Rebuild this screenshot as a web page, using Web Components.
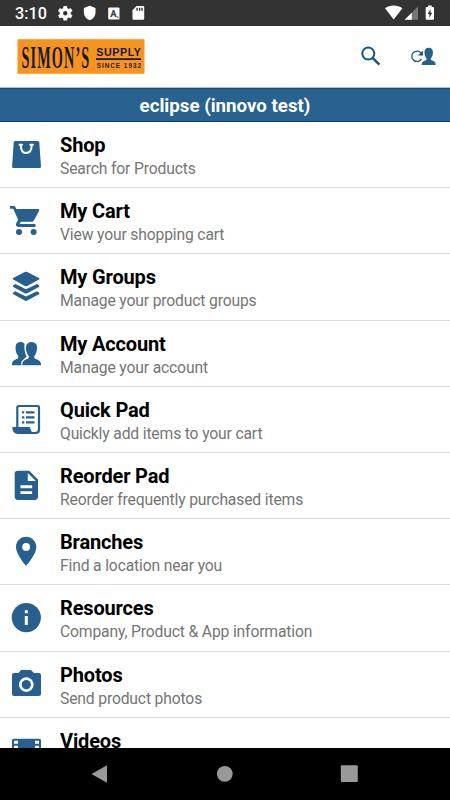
<!DOCTYPE html>
<html lang="en"><head><meta charset="utf-8"><title>Simon's Supply</title>
<style>html,body{margin:0;height:100%;overflow:hidden;background:#fff}body{font-family:Roboto,"Noto Sans",sans-serif}</style></head>
<body><supply-app></supply-app>
<script>
const ICONS={
shop:'<path d="M5.200 2H27.700Q29.200 2 29.300 3.500L31 27.500Q31 29 29.500 29H3.500Q2 29 2.100 27.500L3.700 3.500Q3.900 2 5.200 2Z"/><path d="M10.800 6C10.800 11 12.300 14 16 14S21.700 11 21.700 6M9.500 5.700H12M20.300 5.700H22.900" fill="none" stroke="#fff" stroke-width="2" stroke-linecap="round"/>',
cart:'<path d="M0 1H4.800L6.300 4.100H28.200Q29.800 4.300 29.200 5.800L24 15.200Q23.200 16.700 21.500 16.700H11L9.600 19H25.500V22H8.300Q5.500 21.600 6 18.800L8.200 14.800 3.200 3.700H0Z"/><circle cx="9" cy="27" r="3"/><circle cx="23.600" cy="27" r="3"/>',
groups:'<path d="M14.800 1.100Q16 .5 17.200 1.100L28.900 7Q30.200 7.800 28.900 8.600L17.200 14.900Q16 15.500 14.800 14.900L3.300 8.600Q2 7.800 3.300 7Z"/><path d="M3.300 14.200L5.300 13.100 16 18.200 27 13.100 28.900 14.200Q30.200 15.200 28.900 16L17.200 22.300Q16 22.900 14.800 22.300L3.300 16Q2 15.200 3.300 14.200ZM3.300 21.400L5.300 20.300 16 25.400 27 20.300 28.900 21.400Q30.200 22.400 28.900 23.200L17.200 29.600Q16 30.200 14.800 29.600L3.300 23.200Q2 22.400 3.300 21.400Z"/>',
account:'<path d="M2 27.300C1.900 23.500 3 22.300 7.500 20.700Q8.700 20 8.300 18C6 15.500 5.300 12 5.600 8.500C5.900 5.500 7.800 4 10.500 4C12.300 4 13.500 4.500 14.500 6C14.300 10 14.200 14 16.500 18.200C16.300 20 12 21.500 11.300 24.300V27.300Z"/><path d="M12.300 27.300C12.200 23.500 13.300 22.300 18 20.700Q19.200 20 18.800 18C16.500 15.500 15.700 12 16 8.500C16.400 5.500 18.600 4 21.500 4S26.700 5.500 27 8.500C27.300 12 26.400 15.500 24.300 18Q23.900 20 25 20.700C29.800 22.300 31.100 23.500 31.100 27.300Z" stroke="#fff" stroke-width=".7" paint-order="stroke"/>',
quick:'<path d="M7.300 23V3.500Q7.300 2 8.800 2H27.500Q29 2 29 3.500V25.500Q29 29 25.500 29H7" fill="none" stroke="currentColor" stroke-width="2.200"/><path d="M2.300 23H20Q20.300 28 25 30H8Q2.300 30 2.300 23Z"/><path d="M12 8.300H14.300M16 8.300H24.500M12 13.300H14.300M16 13.300H24.500M12 18.300H14.300M16 18.300H24.500" stroke="currentColor" stroke-width="2.200"/>',
reorder:'<g transform="translate(-1.150,-2.150) scale(1.457)"><path fill-rule="evenodd" d="M14 2H6c-1.100 0-2 .9-2 2v16c0 1.100.9 2 2 2h12c1.100 0 2-.9 2-2V8l-6-6zm2 16H8v-2h8v2zm0-4H8v-2h8v2zm-3-5V3.500L18.500 9H13z"/></g>',
branches:'<g transform="translate(-1.250,-2.100) scale(1.450)"><path fill-rule="evenodd" d="M12 2C8.130 2 5 5.130 5 9c0 5.250 7 13 7 13s7-7.750 7-13c0-3.870-3.130-7-7-7zm0 9.700a2.700 2.700 0 1 1 0-5.400 2.700 2.700 0 0 1 0 5.400z"/></g>',
resources:'<circle cx="16.300" cy="15.600" r="14.600"/><path d="M14.800 8.300H17.800V11.200H14.800ZM14.800 14H17.800V23H14.800Z" fill="#fff"/>',
photos:'<path d="M11 1H21L24 4H29Q31 4 31 6V25Q31 27 29 27H4Q2 27 2 25V6Q2 4 4 4H8.500Z"/><circle cx="16.300" cy="15.600" r="6" fill="none" stroke="#fff" stroke-width="2.700"/>',
videos:'<rect x="2" y="3.700" width="29" height="24" rx="1.500"/><path d="M4 5.700h4v3H4zM4 10.800h4v3H4zM4 15.900h4v3H4zM4 21h4v3H4zM25 5.700h4v3h-4zM25 10.800h4v3h-4zM25 15.900h4v3h-4zM25 21h4v3h-4z" fill="#fff"/>'
};
const def=(name,html)=>customElements.define(name,class extends HTMLElement{
  constructor(){super();const t=document.createElement('template');t.innerHTML=html;this.attachShadow({mode:'open'}).append(t.content.cloneNode(true));}
});
customElements.define('row-icon',class extends HTMLElement{
  connectedCallback(){if(this.shadowRoot)return;this.attachShadow({mode:'open'}).innerHTML=`<style>:host{display:block;width:32px;height:32px;color:#27608f}svg{display:block}</style><svg width="32" height="32" viewBox="0 0 32 32" fill="currentColor">${ICONS[this.getAttribute('name')]}</svg>`;}
});
customElements.define('menu-row',class extends HTMLElement{
  connectedCallback(){if(this.shadowRoot)return;this.attachShadow({mode:'open'}).innerHTML=`<style>
  :host{display:grid;grid-template-columns:32px 1fr;column-gap:18px;box-sizing:border-box;height:66.200px;flex:none;padding:11px 10px 0;border-bottom:1.250px solid #dcdcdc}
  row-icon{margin-top:6px}
  .t{font-size:20px;letter-spacing:-.16px;line-height:24px;font-weight:700;color:#000;white-space:nowrap}
  .s{font-size:15.700px;letter-spacing:-.16px;line-height:20px;margin-top:2px;color:#757575;white-space:nowrap}
  </style><row-icon name="${this.getAttribute('icon')}"></row-icon><div><div class="t"><slot></slot></div><div class="s"><slot name="detail"></slot></div></div>`;}
});
def('status-bar',`<style>:host{display:flex;justify-content:space-between;height:25.500px;flex:none;background:#333;color:#fff}
.time{font-size:16.200px;line-height:27px;padding-left:15px;width:47px;box-sizing:border-box;white-space:nowrap;font-weight:500}.l{display:flex}svg{display:block}</style>
<div class="l"><div class="time">3:10</div><svg width="110" height="25" viewBox="47 0 110 25" fill="#fff"><g transform="translate(56.500,4.500) scale(.73)"><path fill-rule="evenodd" d="M19.430 12.980c.04-.32.070-.64.070-.98s-.03-.66-.07-.98l2.110-1.650c.19-.15.240-.42.120-.64l-2-3.460c-.12-.22-.39-.3-.61-.22l-2.490 1c-.52-.4-1.080-.73-1.690-.98l-.38-2.650A.49.490 0 0 0 14 2h-4c-.25 0-.46.180-.49.420l-.38 2.650c-.61.250-1.170.590-1.690.980l-2.490-1c-.23-.09-.49 0-.61.220l-2 3.460c-.13.220-.07.490.12.640l2.110 1.650c-.04.320-.07.650-.07.980s.03.660.070.980l-2.110 1.650c-.19.150-.24.420-.12.640l2 3.460c.12.220.39.300.61.220l2.490-1c.52.400 1.080.730 1.690.980l.38 2.650c.03.240.24.420.49.420h4c.25 0 .46-.18.490-.42l.38-2.650c.61-.25 1.170-.59 1.690-.98l2.490 1c.23.090.49 0 .61-.22l2-3.460c.12-.22.070-.49-.12-.64l-2.110-1.650zM12 15a3 3 0 1 1 0-6 3 3 0 0 1 0 6z"/></g>
<path d="M89.700 5.700L95.500 8V12.500C95.500 16 93 19.100 89.700 20.300C86.400 19.100 83.900 16 83.900 12.500V8Z"/><rect x="108.200" y="7.400" width="11.300" height="12" rx="1"/><text x="113.400" y="16.500" text-anchor="middle" font-family="Roboto,sans-serif" font-size="9.500" font-weight="700" style="fill:#333">A</text><path d="M117 16.600h1.300v1.200H117z" fill="#333"/>
<path d="M136.500 6H143Q144.200 6 144.200 7.200V18.600Q144.200 19.800 143 19.800H133.700Q132.500 19.800 132.500 18.600V10.300Z"/><path d="M136.400 7.800h1.400v3h-1.400zM138.900 7.800h1.400v3h-1.400zM141.300 7.800h1.400v3h-1.400z" fill="#333"/></svg></div>
<svg width="70" height="25" viewBox="380 0 70 25" fill="#fff"><path d="M385 8.200C390 4.600 397.400 4.600 402.400 8.200L393.700 19.500Z"/><path d="M418 6.600V19.700H404.600Z" fill="#777"/><path d="M411.800 12.700V19.700H404.600Z"/><path d="M428 5.500H431.700V7H433.200Q434 7 434 7.800V19Q434 19.800 433.200 19.800H426.500Q425.700 19.800 425.700 19V7.800Q425.700 7 426.500 7H428Z"/><path d="M430.700 9L427.600 14.100H429.400V18L432.200 12.800H430.400Z" fill="#333"/></svg>`);
def('brand-logo',`<style>:host{display:block;width:128px;height:35px}svg{display:block}</style>
<svg width="128" height="35" viewBox="17 39 128 35"><rect x="17.500" y="39.200" width="127" height="34.600" fill="#f7941f"/><g style="fill:#171a25"><text transform="translate(21.500,67.600) scale(.44,1)" textLength="154" lengthAdjust="spacing" font-family="Liberation Serif,serif" font-weight="700" font-size="32.500">SIMON’S</text><text x="96.300" y="56.200" textLength="44.700" lengthAdjust="spacing" font-family="Liberation Sans,sans-serif" font-weight="700" font-size="10.700">SUPPLY</text><path d="M96 58.200H141V60.100H96z"/><text x="96.700" y="67.600" textLength="44.300" lengthAdjust="spacing" font-family="Liberation Sans,sans-serif" font-weight="700" font-size="6.300">SINCE 1932</text></g></svg>`);
def('app-header',`<style>:host{display:flex;justify-content:space-between;box-sizing:border-box;height:62.500px;flex:none;background:#fff;padding:13.500px 0 0 17px;border-bottom:1px solid #b5bdc5}svg{display:block}</style>
<brand-logo></brand-logo><svg width="110" height="46" viewBox="340 39 110 46" fill="#14528a"><circle cx="368.300" cy="53.600" r="6" fill="none" stroke="#14528a" stroke-width="2"/><path d="M372.600 57.900L379.400 64.700" stroke="#14528a" stroke-width="2.400"/>
<path d="M421.300 53.300A5.200 5.200 0 1 0 421.600 58.700" fill="none" stroke="#14528a" stroke-width="1.300"/><path d="M423 50.800V55.500H418Z"/>
<path fill="#27608f" d="M421.800 65C421.700 62 422.600 61.300 426 60.200Q426.900 59.600 426.500 58.300C425 56.700 424.300 54.200 424.500 51.800C424.700 49.200 426.300 47.800 428.700 47.800S432.700 49.200 432.900 51.800C433.100 54.200 432.500 56.700 430.900 58.300Q430.600 59.600 431.400 60.200C434.800 61.300 435.700 62 435.600 65Z"/></svg>`);
def('site-banner',`<style>:host{display:block;box-sizing:border-box;height:34px;flex:none;background:#29618f;border-top:1px solid #164a7b;border-bottom:1px solid #073a78;color:#fff;text-align:center;font-size:18.700px;font-weight:700;line-height:34px}</style><slot></slot>`);
def('nav-bar',`<style>:host{display:block;height:52px;flex:none;background:#000}svg{display:block}</style><svg width="450" height="52" fill="#999"><path d="M107 17.200V34.700L91.500 26Z"/><circle cx="224.800" cy="25.800" r="7.900"/><rect x="340.800" y="17.200" width="17" height="16.700" rx="1"/></svg>`);
const rows=[['shop','Shop','Search for Products'],['cart','My Cart','View your shopping cart'],['groups','My Groups','Manage your product groups'],['account','My Account','Manage your account'],['quick','Quick Pad','Quickly add items to your cart'],['reorder','Reorder Pad','Reorder frequently purchased items'],['branches','Branches','Find a location near you'],['resources','Resources','Company, Product &amp; App information'],['photos','Photos','Send product photos'],['videos','Videos','']];
def('supply-app',`<style>:host{display:flex;flex-direction:column;width:450px;height:800px;overflow:hidden;background:#fff}main{flex:1;min-height:0;overflow:hidden;display:flex;flex-direction:column}</style>
<status-bar></status-bar><app-header></app-header><site-banner>eclipse (innovo test)</site-banner><main>${rows.map(r=>`<menu-row icon="${r[0]}">${r[1]}<span slot="detail">${r[2]}</span></menu-row>`).join('')}</main><nav-bar></nav-bar>`);
</script></body></html>
